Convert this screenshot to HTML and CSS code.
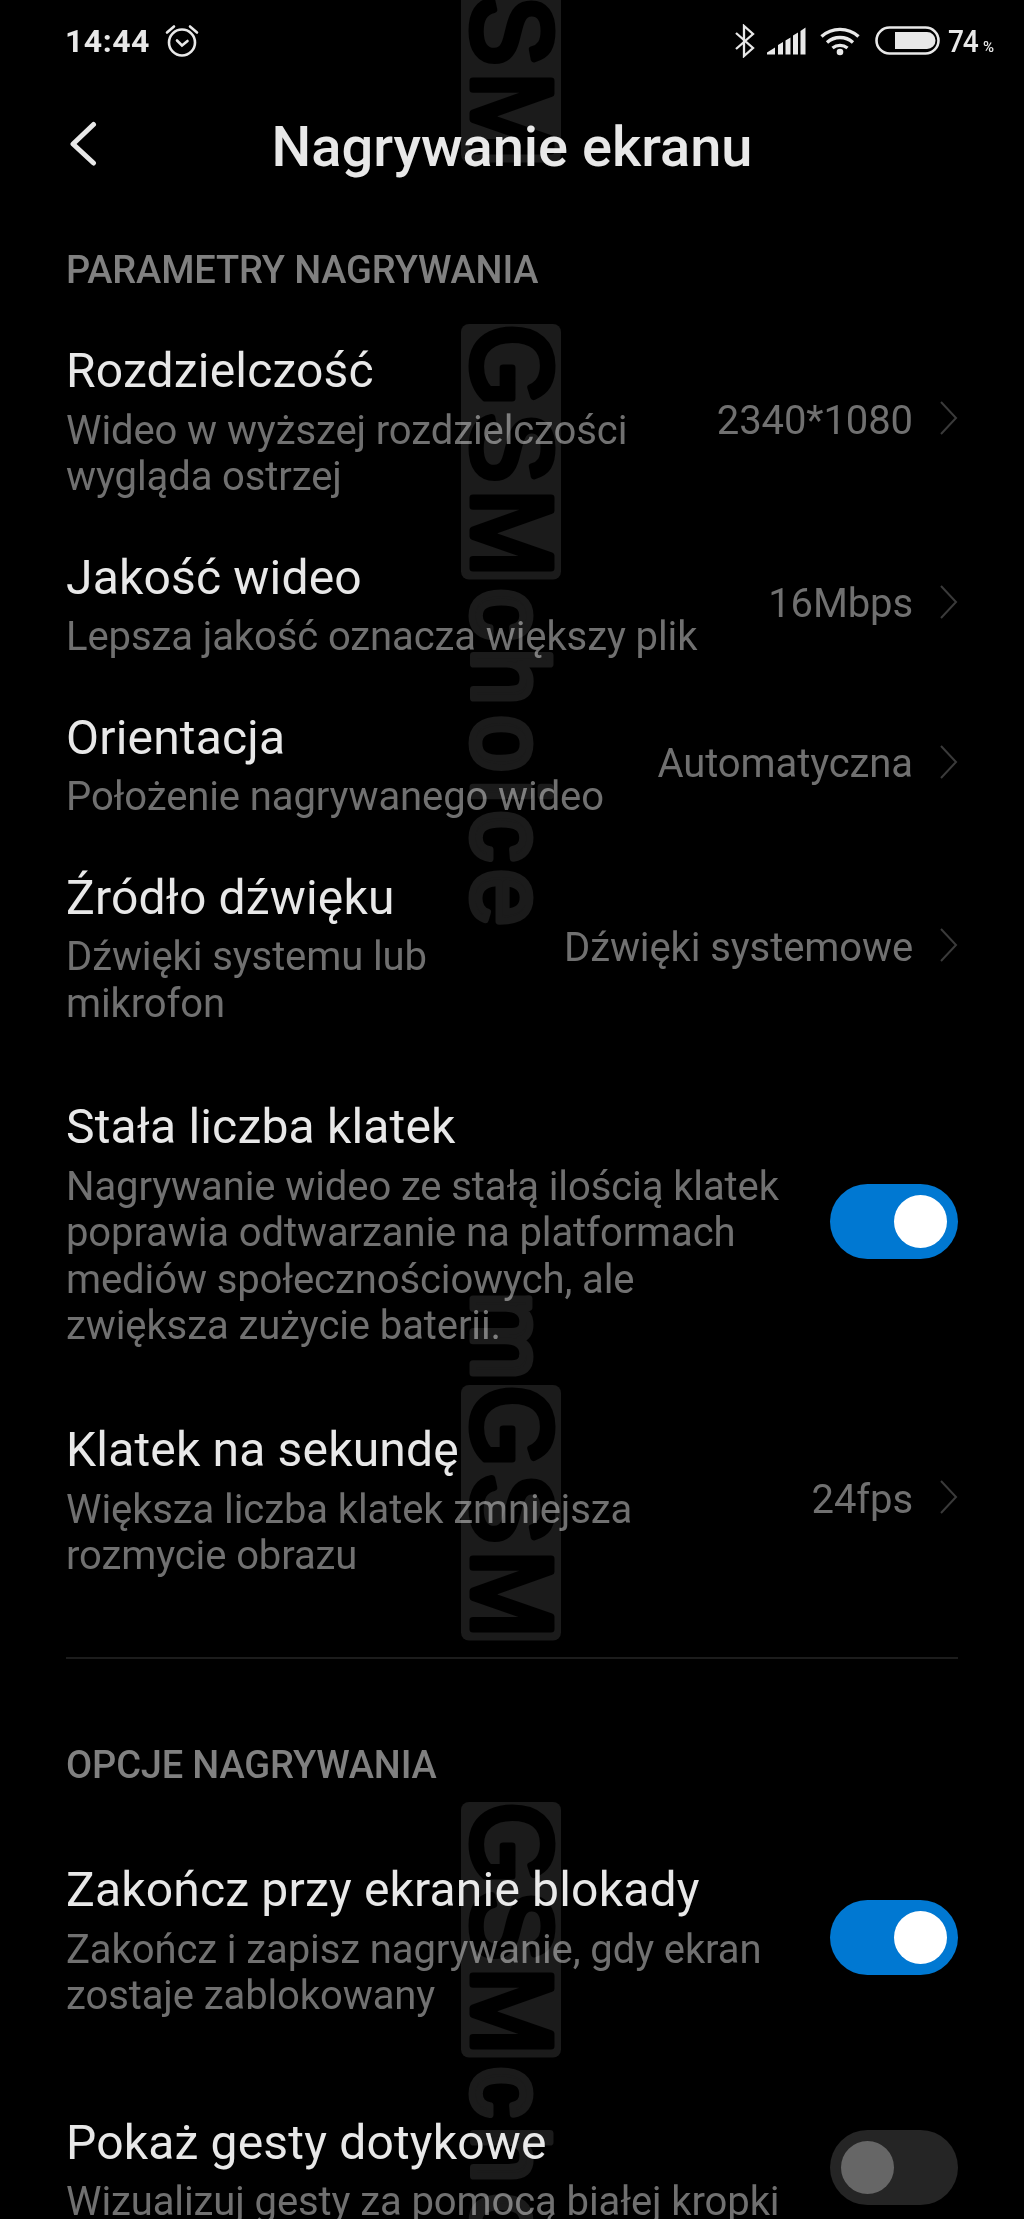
FILE: index.html
```html
<!DOCTYPE html>
<html lang="pl">
  <head>
    <meta charset="UTF-8" />
    <meta name="viewport" content="width=device-width, initial-scale=1.0" />
    <title>Nagrywanie ekranu</title>
    <link rel="stylesheet" href="styles.css">
  </head>
  <body>
    <div class="screen">
      <header class="status-bar">
        <div class="status-left">
          <span class="time">14:44</span>
          <svg class="alarm" width="34" height="34" viewBox="0 0 34 34">
            <circle cx="17" cy="18.5" r="13" />
            <path d="M12 16.5l5 5 5.500-4.500M2 8.500l7-6M32 8.500l-7-6" />
          </svg>
        </div>
        <div class="status-right">
          <svg class="bluetooth" width="21" height="34" viewBox="0 0 21 34">
            <path d="M2 9l17 15-9 8V2l9 8L2 25" />
          </svg>
          <svg class="signal" width="39" height="28" viewBox="0 0 39 28">
            <path d="M0 27.500v-2l8-5v7zM11 27.500V18l5-3v12.500zM18.500 27.500V13.500l5-3v17zM26 27.500V8.500l5-3v22zM33.500 27.500V4l5-3.500v27z" />
          </svg>
          <svg class="wifi" width="42" height="30" viewBox="0 0 42 30">
            <path d="M2.500 10.500a27.500 27.500 0 0 1 37 0M8 16.500a19.500 19.500 0 0 1 26 0M13.500 22a12 12 0 0 1 15 0" />
            <circle cx="21" cy="26" r="3.300" />
          </svg>
          <svg class="battery" width="66" height="30" viewBox="0 0 66 30">
            <rect x="1.500" y="1.500" width="62" height="26" rx="13" />
            <path d="M20 6h32a8.500 8.500 0 0 1 0 17H20z" />
          </svg>
          <div class="percent"><span>74</span><small>%</small></div>
        </div>
      </header>

      <div class="app-bar">
        <svg class="back" width="30" height="50" viewBox="0 0 30 50">
          <path d="M26.500 5.500L6 25l20.500 19" />
        </svg>
        <h1>Nagrywanie ekranu</h1>
      </div>

      <main>
        <section>
          <h2>PARAMETRY NAGRYWANIA</h2>
          <div class="row">
            <div class="row-text">
              <h3>Rozdzielczość</h3>
              <p>Wideo w wyższej rozdzielczości wygląda ostrzej</p>
            </div>
            <span class="value">2340*1080</span>
            <svg class="arrow" width="19" height="34" viewBox="0 0 19 34"><path d="M2 1l15 16L2 33" /></svg>
          </div>
          <div class="row">
            <div class="row-text">
              <h3>Jakość wideo</h3>
              <p>Lepsza jakość oznacza większy plik</p>
            </div>
            <span class="value">16Mbps</span>
            <svg class="arrow" width="19" height="34" viewBox="0 0 19 34"><path d="M2 1l15 16L2 33" /></svg>
          </div>
          <div class="row">
            <div class="row-text">
              <h3>Orientacja</h3>
              <p>Położenie nagrywanego wideo</p>
            </div>
            <span class="value">Automatyczna</span>
            <svg class="arrow" width="19" height="34" viewBox="0 0 19 34"><path d="M2 1l15 16L2 33" /></svg>
          </div>
          <div class="row">
            <div class="row-text">
              <h3>Źródło dźwięku</h3>
              <p>Dźwięki systemu lub mikrofon</p>
            </div>
            <span class="value">Dźwięki systemowe</span>
            <svg class="arrow" width="19" height="34" viewBox="0 0 19 34"><path d="M2 1l15 16L2 33" /></svg>
          </div>
          <div class="row row-switch">
            <div class="row-text">
              <h3>Stała liczba klatek</h3>
              <p>Nagrywanie wideo ze stałą ilością klatek poprawia odtwarzanie na platformach mediów społecznościowych, ale zwiększa zużycie baterii.</p>
            </div>
            <span class="switch on"></span>
          </div>
          <div class="row">
            <div class="row-text">
              <h3>Klatek na sekundę</h3>
              <p>Większa liczba klatek zmniejsza rozmycie obrazu</p>
            </div>
            <span class="value">24fps</span>
            <svg class="arrow" width="19" height="34" viewBox="0 0 19 34"><path d="M2 1l15 16L2 33" /></svg>
          </div>
        </section>

        <section class="options">
          <h2>OPCJE NAGRYWANIA</h2>
          <div class="row row-switch">
            <div class="row-text">
              <h3>Zakończ przy ekranie blokady</h3>
              <p>Zakończ i zapisz nagrywanie, gdy ekran zostaje zablokowany</p>
            </div>
            <span class="switch on"></span>
          </div>
          <div class="row row-switch">
            <div class="row-text">
              <h3>Pokaż gesty dotykowe</h3>
              <p>Wizualizuj gesty za pomocą białej kropki</p>
            </div>
            <span class="switch"></span>
          </div>
        </section>
      </main>

      <!-- watermark, runs down the middle of the screen -->
      <svg class="watermark" width="1024" height="2219" viewBox="0 0 1024 2219">
        <defs>
          <g id="gsm">
            <rect x="0" y="-88.500" width="255.500" height="100" rx="8" />
            <text class="cut" transform="scale(.93 1)" x="44.600 132.800 224.700">GSM</text>
          </g>
          <text id="choice" class="lower" transform="scale(.96 1)" x="302 367.200 437 487 533.300 597.400">choice</text>
        </defs>
        <g transform="translate(472.500 -93) rotate(90)">
          <use href="#gsm" />
        </g>
        <g transform="translate(472.500 324) rotate(90)">
          <use href="#gsm" />
          <use href="#choice" />
        </g>
        <g transform="translate(472.500 1385) rotate(90)">
          <text class="lower" x="-49">m</text>
          <use href="#gsm" />
        </g>
        <g transform="translate(472.500 1802) rotate(90)">
          <use href="#gsm" />
          <use href="#choice" />
        </g>
      </svg>
    </div>
  </body>
</html>
```

FILE: styles.css
```css
:root {
  --bg: #000;
  --text: #e8e8e8;
  --text-dim: #707070;
  --label: #808080;
  --accent: #0078d2;
  --mark: #1b1b1b;
}

html {
  box-sizing: border-box;
  font-family: Roboto, sans-serif;
}

*,
*:before,
*:after {
  box-sizing: inherit;
}

body {
  margin: 0;
  background-color: var(--bg);
  color: var(--text);
}

h1,
h2,
h3,
p {
  margin: 0;
}

.screen {
  position: relative;
  height: 2219px;
  overflow: hidden;
  background-color: var(--bg);
}

/* status bar */
.status-bar {
  display: flex;
  justify-content: space-between;
  height: 80px;
  padding: 2px 28px 0 65px;
}

.status-left,
.status-right {
  display: flex;
  align-items: center;
}

.status-bar svg {
  fill: var(--text);
}

.time {
  font-size: 32px;
  font-weight: 700;
  letter-spacing: 0.5px;
}

.status-bar .alarm {
  margin-left: 15px;
  fill: none;
  stroke: var(--text);
  stroke-width: 2.6;
  stroke-linecap: round;
}

.status-bar .bluetooth {
  margin-right: 12px;
  fill: none;
  stroke: var(--text);
  stroke-width: 2.3;
}

.signal {
  margin-right: 13px;
}

.wifi {
  margin-right: 14px;
}

.wifi path {
  fill: none;
  stroke: var(--text);
  stroke-width: 3.4;
}

.battery rect {
  fill: none;
  stroke: var(--text);
  stroke-width: 2.6;
}

.percent {
  display: flex;
  align-items: baseline;
  width: 48px;
  margin-left: 7px;
  font-size: 32px;
  font-weight: 500;
}

.percent span {
  width: 35px;
  letter-spacing: -1.5px;
  transform: scaleX(0.88);
  transform-origin: left;
}

.percent small {
  font-size: 15px;
}

/* app bar */
.app-bar {
  display: grid;
  grid-template-columns: 70px 1fr 70px;
  align-items: center;
  height: 134px;
  padding: 0 67px;
}

.back {
  margin-bottom: 6px;
  fill: none;
  stroke: var(--text);
  stroke-width: 5;
  stroke-linecap: round;
  stroke-linejoin: round;
}

h1 {
  font-size: 56px;
  font-weight: 500;
  line-height: 66px;
  text-align: center;
  white-space: nowrap;
}

/* list */
main {
  padding: 34px 66px 0;
}

h2 {
  margin-bottom: 25.5px;
  color: var(--label);
  font-size: 38px;
  font-weight: 500;
  line-height: 44.5px;
  letter-spacing: -0.15px;
}

.row {
  display: flex;
  align-items: center;
  padding: 25px 0 24px;
}

.row-switch {
  padding: 48px 0 47px;
}

.row-text {
  flex: 1;
}

h3 {
  margin-bottom: 8.4px;
  font-size: 48px;
  font-weight: 400;
  line-height: 56.2px;
  letter-spacing: 0.18px;
}

p,
.value {
  color: var(--text-dim);
  font-size: 40px;
  line-height: 46.5px;
  letter-spacing: -0.1px;
}

.value {
  margin-left: 40px;
  margin-bottom: 1px;
  white-space: nowrap;
}

.arrow {
  margin: 0 0 7px 26px;
  fill: none;
  stroke: #3a3a3a;
  stroke-width: 2;
}

.switch {
  display: flex;
  width: 128px;
  height: 75px;
  margin: 0 0 6px 40px;
  padding: 11px;
  border-radius: 38px;
  background-color: #252525;
}

.switch:before {
  content: "";
  width: 53px;
  height: 53px;
  border-radius: 50%;
  background-color: #666;
}

.switch.on {
  justify-content: flex-end;
  background-color: var(--accent);
}

.switch.on:before {
  background-color: #fff;
}

.options {
  margin-top: 53.5px;
  padding-top: 84px;
  border-top: 2px solid #1c1c1c;
}

.options h2 {
  margin-bottom: 26.5px;
}

/* watermark */
.watermark {
  position: absolute;
  top: 0;
  left: 0;
  fill: var(--mark);
  mix-blend-mode: screen;
  pointer-events: none;
}

.watermark text {
  font-family: "Liberation Sans", sans-serif;
  font-size: 113px;
  text-anchor: middle;
  stroke: var(--mark);
  stroke-width: 7;
  stroke-linejoin: round;
}

.watermark .lower {
  font-size: 106px;
}

.watermark .cut {
  fill: #000;
  stroke: #000;
}
```
